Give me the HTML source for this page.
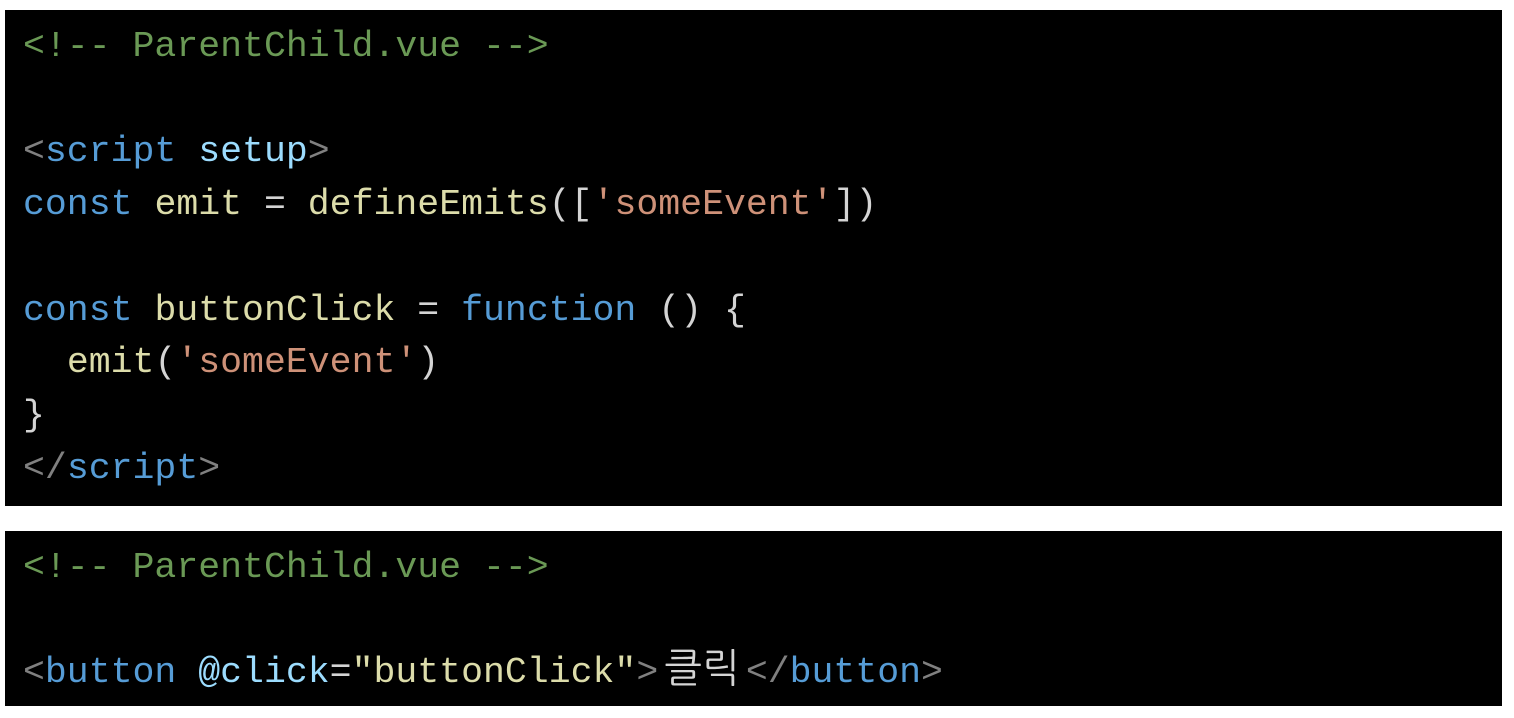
<!DOCTYPE html>
<html><head><meta charset="utf-8"><style>
html,body{margin:0;padding:0;background:#fff;width:1514px;height:718px;overflow:hidden}
.b{position:absolute;left:5px;width:1497px;background:#000;box-sizing:border-box;padding-left:18px}
pre{margin:0;font-family:"Liberation Mono","NanumGothic",monospace;font-size:36.5px;line-height:52.7px;color:#d4d4d4;white-space:pre}
.c{color:#6a9955}.g{color:#808080}.t{color:#569cd6}.a{color:#9cdcfe}.s{color:#ce9178}.f{color:#dcdcaa}
.k{display:inline-block;width:87.6px;font-size:40px;text-align:center;vertical-align:top}
</style></head><body>
<div class="b" style="top:10px;height:496px;padding-top:11px"><pre><span class="c">&lt;!-- ParentChild.vue --&gt;</span>

<span class="g">&lt;</span><span class="t">script</span> <span class="a">setup</span><span class="g">&gt;</span>
<span class="t">const</span> <span class="f">emit</span> = <span class="f">defineEmits</span>([<span class="s">'someEvent'</span>])

<span class="t">const</span> <span class="f">buttonClick</span> = <span class="t">function</span> () {
  <span class="f">emit</span>(<span class="s">'someEvent'</span>)
}
<span class="g">&lt;/</span><span class="t">script</span><span class="g">&gt;</span></pre></div>
<div class="b" style="top:531px;height:175px;padding-top:11px"><pre><span class="c">&lt;!-- ParentChild.vue --&gt;</span>

<span class="g">&lt;</span><span class="t">button</span> <span class="a">@click</span>=<span class="f">"buttonClick"</span><span class="g">&gt;</span><span class="k">클릭</span><span class="g">&lt;/</span><span class="t">button</span><span class="g">&gt;</span></pre></div>
</body></html>
